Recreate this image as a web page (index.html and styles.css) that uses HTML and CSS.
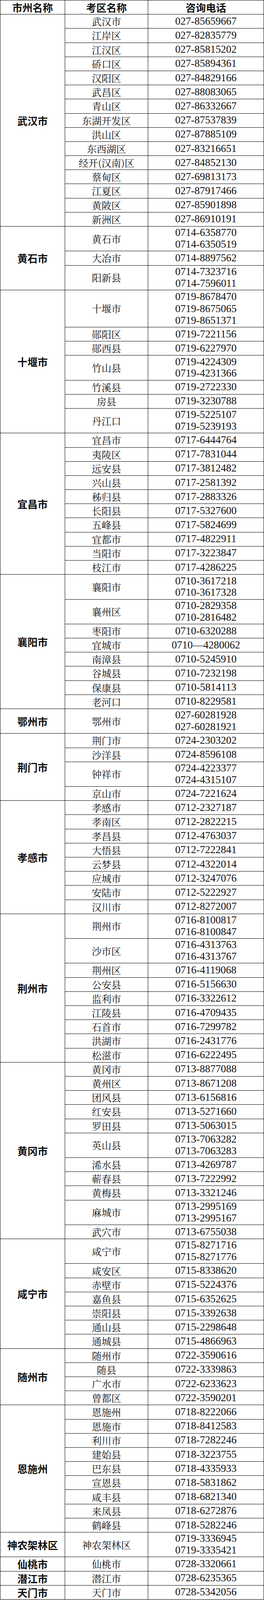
FILE: index.html
```html
<!DOCTYPE html>
<html lang="zh-CN">
<head>
<meta charset="utf-8">
<meta name="viewport" content="width=device-width, initial-scale=1">
<title>湖北省各市州考区咨询电话</title>
<link rel="stylesheet" href="styles.css">
</head>
<body>
<div class="sheet">
  <div class="cell head c1 h1">市州名称</div>
  <div class="cell head c2 h1">考区名称</div>
  <div class="cell head c3 h1">咨询电话</div>

  <div class="cell city span15">武汉市</div>
  <div class="cell area h1">武汉市</div><div class="cell phone h1">027-85659667</div>
  <div class="cell area h1">江岸区</div><div class="cell phone h1">027-82835779</div>
  <div class="cell area h1">江汉区</div><div class="cell phone h1">027-85815202</div>
  <div class="cell area h1">硚口区</div><div class="cell phone h1">027-85894361</div>
  <div class="cell area h1">汉阳区</div><div class="cell phone h1">027-84829166</div>
  <div class="cell area h1">武昌区</div><div class="cell phone h1">027-88083065</div>
  <div class="cell area h1">青山区</div><div class="cell phone h1">027-86332667</div>
  <div class="cell area h1">东湖开发区</div><div class="cell phone h1">027-87537839</div>
  <div class="cell area h1">洪山区</div><div class="cell phone h1">027-87885109</div>
  <div class="cell area h1">东西湖区</div><div class="cell phone h1">027-83216651</div>
  <div class="cell area h1">经开(汉南)区</div><div class="cell phone h1">027-84852130</div>
  <div class="cell area h1">蔡甸区</div><div class="cell phone h1">027-69813173</div>
  <div class="cell area h1">江夏区</div><div class="cell phone h1">027-87917466</div>
  <div class="cell area h1">黄陂区</div><div class="cell phone h1">027-85901898</div>
  <div class="cell area h1">新洲区</div><div class="cell phone h1">027-86910191</div>

  <div class="cell city span3">黄石市</div>
  <div class="cell area h2">黄石市</div><div class="cell phone h2"><span>0714-6358770</span><span>0714-6350519</span></div>
  <div class="cell area h1">大冶市</div><div class="cell phone h1">0714-8897562</div>
  <div class="cell area h2">阳新县</div><div class="cell phone h2"><span>0714-7323716</span><span>0714-7596011</span></div>

  <div class="cell city span7">十堰市</div>
  <div class="cell area h3">十堰市</div><div class="cell phone h3"><span>0719-8678470</span><span>0719-8675065</span><span>0719-8651371</span></div>
  <div class="cell area h1">郧阳区</div><div class="cell phone h1">0719-7221156</div>
  <div class="cell area h1">郧西县</div><div class="cell phone h1">0719-6227970</div>
  <div class="cell area h2">竹山县</div><div class="cell phone h2"><span>0719-4224309</span><span>0719-4231366</span></div>
  <div class="cell area h1">竹溪县</div><div class="cell phone h1">0719-2722330</div>
  <div class="cell area h1">房县</div><div class="cell phone h1">0719-3230788</div>
  <div class="cell area h2">丹江口</div><div class="cell phone h2"><span>0719-5225107</span><span>0719-5239193</span></div>

  <div class="cell city span10">宜昌市</div>
  <div class="cell area h1">宜昌市</div><div class="cell phone h1">0717-6444764</div>
  <div class="cell area h1">夷陵区</div><div class="cell phone h1">0717-7831044</div>
  <div class="cell area h1">远安县</div><div class="cell phone h1">0717-3812482</div>
  <div class="cell area h1">兴山县</div><div class="cell phone h1">0717-2581392</div>
  <div class="cell area h1">秭归县</div><div class="cell phone h1">0717-2883326</div>
  <div class="cell area h1">长阳县</div><div class="cell phone h1">0717-5327600</div>
  <div class="cell area h1">五峰县</div><div class="cell phone h1">0717-5824699</div>
  <div class="cell area h1">宜都市</div><div class="cell phone h1">0717-4822911</div>
  <div class="cell area h1">当阳市</div><div class="cell phone h1">0717-3223847</div>
  <div class="cell area h1">枝江市</div><div class="cell phone h1">0717-4286225</div>

  <div class="cell city span8">襄阳市</div>
  <div class="cell area h2">襄阳市</div><div class="cell phone h2"><span>0710-3617218</span><span>0710-3617328</span></div>
  <div class="cell area h2">襄州区</div><div class="cell phone h2"><span>0710-2829358</span><span>0710-2816482</span></div>
  <div class="cell area h1">枣阳市</div><div class="cell phone h1">0710-6320288</div>
  <div class="cell area h1">宜城市</div><div class="cell phone h1">0710—4280062</div>
  <div class="cell area h1">南漳县</div><div class="cell phone h1">0710-5245910</div>
  <div class="cell area h1">谷城县</div><div class="cell phone h1">0710-7232198</div>
  <div class="cell area h1">保康县</div><div class="cell phone h1">0710-5814113</div>
  <div class="cell area h1">老河口</div><div class="cell phone h1">0710-8229581</div>

  <div class="cell city">鄂州市</div>
  <div class="cell area h2">鄂州市</div><div class="cell phone h2"><span>027-60281928</span><span>027-60281921</span></div>

  <div class="cell city span4">荆门市</div>
  <div class="cell area h1">荆门市</div><div class="cell phone h1">0724-2303202</div>
  <div class="cell area h1">沙洋县</div><div class="cell phone h1">0724-8596108</div>
  <div class="cell area h2">钟祥市</div><div class="cell phone h2"><span>0724-4223377</span><span>0724-4315107</span></div>
  <div class="cell area h1">京山市</div><div class="cell phone h1">0724-7221624</div>

  <div class="cell city span8">孝感市</div>
  <div class="cell area h1">孝感市</div><div class="cell phone h1">0712-2327187</div>
  <div class="cell area h1">孝南区</div><div class="cell phone h1">0712-2822215</div>
  <div class="cell area h1">孝昌县</div><div class="cell phone h1">0712-4763037</div>
  <div class="cell area h1">大悟县</div><div class="cell phone h1">0712-7222841</div>
  <div class="cell area h1">云梦县</div><div class="cell phone h1">0712-4322014</div>
  <div class="cell area h1">应城市</div><div class="cell phone h1">0712-3247076</div>
  <div class="cell area h1">安陆市</div><div class="cell phone h1">0712-5222927</div>
  <div class="cell area h1">汉川市</div><div class="cell phone h1">0712-8272007</div>

  <div class="cell city span9">荆州市</div>
  <div class="cell area h2">荆州市</div><div class="cell phone h2"><span>0716-8100817</span><span>0716-8100847</span></div>
  <div class="cell area h2">沙市区</div><div class="cell phone h2"><span>0716-4313763</span><span>0716-4313767</span></div>
  <div class="cell area h1">荆州区</div><div class="cell phone h1">0716-4119068</div>
  <div class="cell area h1">公安县</div><div class="cell phone h1">0716-5156630</div>
  <div class="cell area h1">监利市</div><div class="cell phone h1">0716-3322612</div>
  <div class="cell area h1">江陵县</div><div class="cell phone h1">0716-4709435</div>
  <div class="cell area h1">石首市</div><div class="cell phone h1">0716-7299782</div>
  <div class="cell area h1">洪湖市</div><div class="cell phone h1">0716-2431776</div>
  <div class="cell area h1">松滋市</div><div class="cell phone h1">0716-6222495</div>

  <div class="cell city span11">黄冈市</div>
  <div class="cell area h1">黄冈市</div><div class="cell phone h1">0713-8877088</div>
  <div class="cell area h1">黄州区</div><div class="cell phone h1">0713-8671208</div>
  <div class="cell area h1">团风县</div><div class="cell phone h1">0713-6156816</div>
  <div class="cell area h1">红安县</div><div class="cell phone h1">0713-5271660</div>
  <div class="cell area h1">罗田县</div><div class="cell phone h1">0713-5063015</div>
  <div class="cell area h2">英山县</div><div class="cell phone h2"><span>0713-7063282</span><span>0713-7063283</span></div>
  <div class="cell area h1">浠水县</div><div class="cell phone h1">0713-4269787</div>
  <div class="cell area h1">蕲春县</div><div class="cell phone h1">0713-7222992</div>
  <div class="cell area h1">黄梅县</div><div class="cell phone h1">0713-3321246</div>
  <div class="cell area h2">麻城市</div><div class="cell phone h2"><span>0713-2995169</span><span>0713-2995167</span></div>
  <div class="cell area h1">武穴市</div><div class="cell phone h1">0713-6755038</div>

  <div class="cell city span7">咸宁市</div>
  <div class="cell area h2">咸宁市</div><div class="cell phone h2"><span>0715-8271716</span><span>0715-8271776</span></div>
  <div class="cell area h1">咸安区</div><div class="cell phone h1">0715-8338620</div>
  <div class="cell area h1">赤壁市</div><div class="cell phone h1">0715-5224376</div>
  <div class="cell area h1">嘉鱼县</div><div class="cell phone h1">0715-6352625</div>
  <div class="cell area h1">崇阳县</div><div class="cell phone h1">0715-3392638</div>
  <div class="cell area h1">通山县</div><div class="cell phone h1">0715-2298648</div>
  <div class="cell area h1">通城县</div><div class="cell phone h1">0715-4866963</div>

  <div class="cell city span4">随州市</div>
  <div class="cell area h1">随州市</div><div class="cell phone h1">0722-3590616</div>
  <div class="cell area h1">随县</div><div class="cell phone h1">0722-3339863</div>
  <div class="cell area h1">广水市</div><div class="cell phone h1">0722-6233623</div>
  <div class="cell area h1">曾都区</div><div class="cell phone h1">0722-3590201</div>

  <div class="cell city span9">恩施州</div>
  <div class="cell area h1">恩施州</div><div class="cell phone h1">0718-8222066</div>
  <div class="cell area h1">恩施市</div><div class="cell phone h1">0718-8412583</div>
  <div class="cell area h1">利川市</div><div class="cell phone h1">0718-7282246</div>
  <div class="cell area h1">建始县</div><div class="cell phone h1">0718-3223755</div>
  <div class="cell area h1">巴东县</div><div class="cell phone h1">0718-4335933</div>
  <div class="cell area h1">宣恩县</div><div class="cell phone h1">0718-5831862</div>
  <div class="cell area h1">咸丰县</div><div class="cell phone h1">0718-6821340</div>
  <div class="cell area h1">来凤县</div><div class="cell phone h1">0718-6272876</div>
  <div class="cell area h1">鹤峰县</div><div class="cell phone h1">0718-5282246</div>

  <div class="cell city">神农架林区</div>
  <div class="cell area h2">神农架林区</div><div class="cell phone h2"><span>0719-3336945</span><span>0719-3335421</span></div>

  <div class="cell city">仙桃市</div>
  <div class="cell area h1">仙桃市</div><div class="cell phone h1">0728-3320661</div>

  <div class="cell city">潜江市</div>
  <div class="cell area h1">潜江市</div><div class="cell phone h1">0728-6235365</div>

  <div class="cell city">天门市</div>
  <div class="cell area h1">天门市</div><div class="cell phone h1">0728-5342056</div>
</div>
</body>
</html>
```

FILE: styles.css
```css
:root {
  /* one reference pixel, horizontally and vertically, scaled to the window */
  --u: calc(100vw / 677);
  --v: calc(100vh / 4526);
}

html, body {
  margin: 0;
  padding: 0;
  background: #ffffff;
  overflow: hidden;
}

.sheet {
  display: grid;
  grid-template-columns: calc(166 * var(--u)) calc(213 * var(--u)) 1fr;
  grid-auto-rows: auto;
  width: 100%;
  box-sizing: border-box;
  border-top: 1px solid #000000;
  border-left: 1px solid #000000;
  color: #111111;
}

.cell {
  box-sizing: border-box;
  border-right: 1px solid #000000;
  border-bottom: 1px solid #000000;
  display: flex;
  flex-direction: column;
  align-items: center;
  justify-content: center;
  overflow: hidden;
  white-space: nowrap;
}

.h1 { height: calc(40 * var(--v)); }
.h2 { height: calc(70 * var(--v)); }
.h3 { height: calc(105 * var(--v)); }

.c1, .city { grid-column: 1; }
.c2, .area { grid-column: 2; }
.c3, .phone { grid-column: 3; }

.span3 { grid-row: span 3; }
.span4 { grid-row: span 4; }
.span7 { grid-row: span 7; }
.span8 { grid-row: span 8; }
.span9 { grid-row: span 9; }
.span10 { grid-row: span 10; }
.span11 { grid-row: span 11; }
.span15 { grid-row: span 15; }

.head {
  font-family: "Noto Sans CJK SC", sans-serif;
  font-weight: 700;
  font-size: 26px;
  line-height: calc(30 * var(--v));
  padding-bottom: calc(1 * var(--v));
}

.city {
  font-family: "Noto Sans CJK SC", sans-serif;
  font-weight: 700;
  font-size: 26px;
  line-height: calc(30 * var(--v));
}

.area {
  font-family: "Noto Serif CJK SC", "Noto Sans CJK SC", serif;
  font-weight: 400;
  font-size: 25px;
  line-height: calc(30 * var(--v));
}

.phone {
  font-family: "Liberation Serif", "Times New Roman", serif;
  font-size: 27px;
  line-height: calc(33 * var(--v));
}

.phone span {
  display: block;
}

.phone.h3 {
  line-height: calc(34 * var(--v));
}
```
